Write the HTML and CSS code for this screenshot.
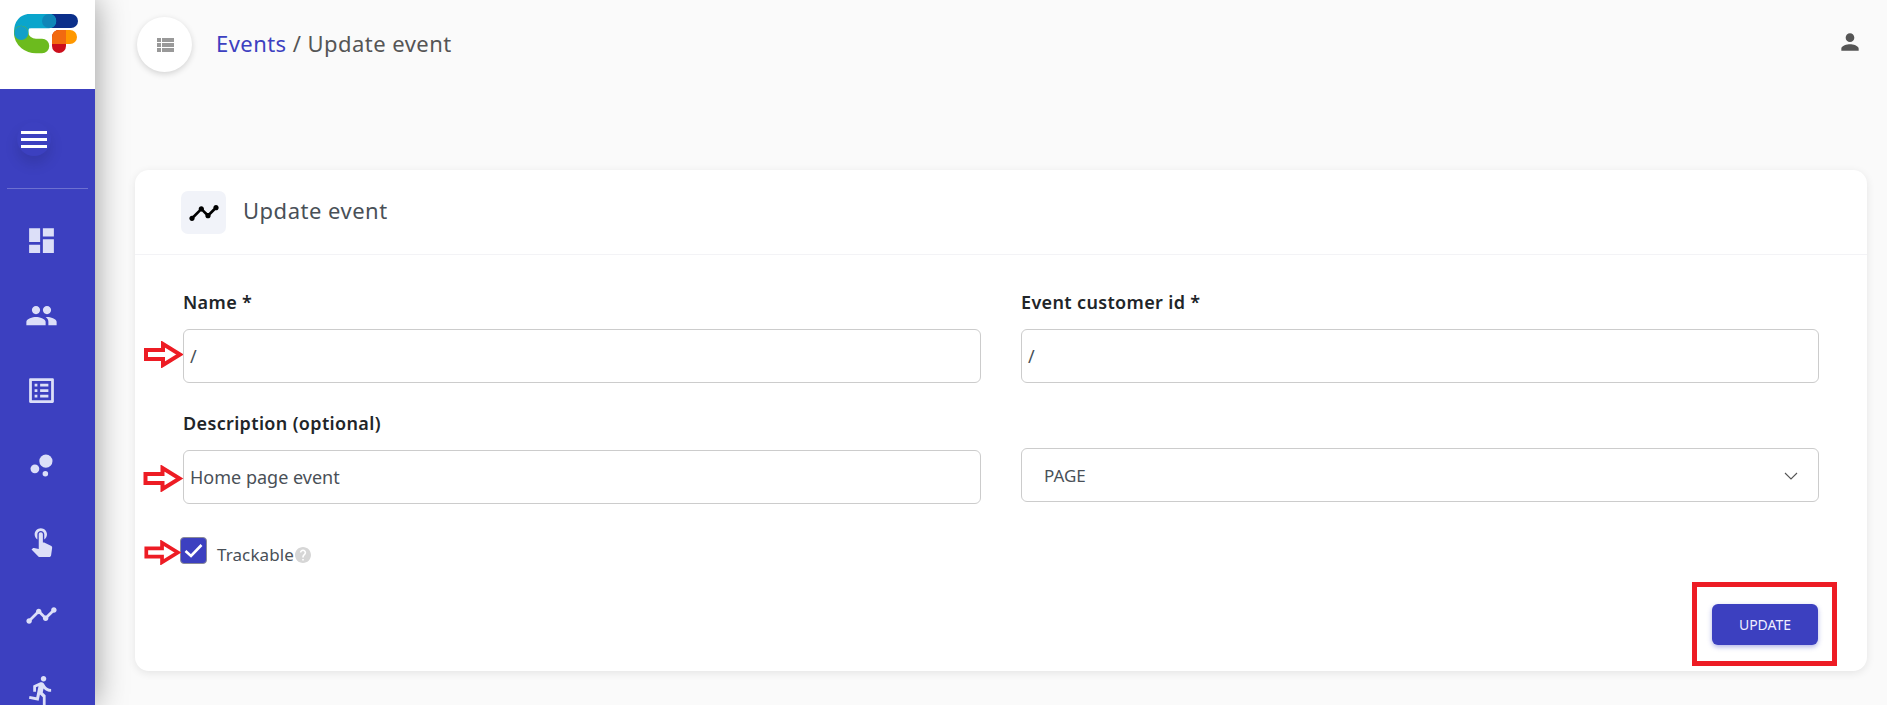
FILE: index.html
```html
<!DOCTYPE html>
<html lang="en">
<head>
<meta charset="utf-8">
<title>Update event</title>
<link rel="stylesheet" href="styles.css">
</head>
<body>
<div class="app">
  <aside class="sidebar">
    <div class="brand">
      <svg class="logo" viewBox="0 0 66 40" width="66" height="40" fill="none" stroke-linecap="round">
        <path d="M35 7H57" stroke="#0b2f8a" stroke-width="14"/>
        <path d="M35 7H17Q7.250 7 7.250 18" stroke="#0aa5cc" stroke-width="14.500"/>
        <path d="M7.250 19C7.250 27 15 32 22 32H28" stroke="#6cbb1e" stroke-width="14.500"/>
        <circle cx="7.250" cy="19" r="7" fill="#12a0c8"/>
        <circle cx="35" cy="7" r="7" fill="#0f86b8"/>
        <path d="M45 23H56" stroke="#ff9800" stroke-width="14"/>
        <path d="M45 23V32" stroke="#cc0f1c" stroke-width="14"/>
        <path d="M38 30V23a7 7 0 0 1 7-7h7V30Z" fill="#f26a10"/>
      </svg>
    </div>
    <div class="menu-zone">
      <button class="burger" aria-label="Menu">
        <svg viewBox="0 0 26 17" width="26" height="17" fill="#fff"><rect width="26" height="3" y="0"/><rect width="26" height="3" y="7"/><rect width="26" height="3" y="14"/></svg>
      </button>
    </div>
    <nav class="nav">
      <a class="nav-item"><svg viewBox="0 0 24 24"><path d="M3 13h8V3H3v10zm0 8h8v-6H3v6zm10 0h8V11h-8v10zm0-18v6h8V3h-8z"/></svg></a>
      <a class="nav-item"><svg viewBox="0 0 24 24"><path d="M16 11c1.660 0 2.990-1.340 2.990-3S17.660 5 16 5c-1.660 0-3 1.340-3 3s1.340 3 3 3zm-8 0c1.660 0 2.990-1.340 2.990-3S9.660 5 8 5C6.340 5 5 6.340 5 8s1.340 3 3 3zm0 2c-2.330 0-7 1.170-7 3.500V19h14v-2.500c0-2.330-4.670-3.500-7-3.500zm8 0c-.29 0-.62.02-.97.05 1.160.84 1.970 1.970 1.970 3.450V19h6v-2.500c0-2.330-4.670-3.500-7-3.500z"/></svg></a>
      <a class="nav-item"><svg viewBox="0 0 24 24"><path d="M19 5v14H5V5h14m1.100-2H3.900c-.5 0-.9.4-.9.9v16.200c0 .4.4.9.9.9h16.200c.4 0 .9-.5.9-.9V3.900c0-.5-.5-.9-.9-.9zM11 7h6v2h-6V7zm0 4h6v2h-6v-2zm0 4h6v2h-6zM7 7h2v2H7zm0 4h2v2H7zm0 4h2v2H7z"/></svg></a>
      <a class="nav-item"><svg viewBox="0 0 24 24"><circle cx="7.200" cy="14.400" r="3.200"/><circle cx="14.800" cy="18" r="2"/><circle cx="15.200" cy="8.800" r="4.800"/></svg></a>
      <a class="nav-item"><svg viewBox="0 0 24 24"><path d="M9 11.240V7.500C9 6.120 10.120 5 11.500 5S14 6.120 14 7.500v3.740c1.210-.81 2-2.180 2-3.740C16 5.010 13.990 3 11.500 3S7 5.010 7 7.500c0 1.560.79 2.930 2 3.740zm9.840 4.630l-4.540-2.260c-.17-.07-.35-.11-.54-.11H13v-6c0-.83-.67-1.500-1.500-1.500S10 6.670 10 7.500v10.740l-3.430-.72c-.08-.01-.15-.03-.24-.03-.31 0-.59.13-.79.33l-.79.8 4.940 4.940c.27.27.65.44 1.060.44h6.790c.75 0 1.330-.55 1.440-1.280l.75-5.270c.01-.07.02-.14.02-.2 0-.62-.38-1.160-.91-1.380z"/></svg></a>
      <a class="nav-item"><svg viewBox="0 0 24 24"><path d="M23 8c0 1.100-.9 2-2 2-.18 0-.35-.02-.51-.07l-3.560 3.550c.05.16.07.34.07.52 0 1.100-.9 2-2 2s-2-.9-2-2c0-.18.02-.36.07-.52l-2.550-2.550c-.16.05-.34.07-.52.07s-.36-.02-.52-.07l-4.550 4.560c.05.16.07.33.07.51 0 1.100-.9 2-2 2s-2-.9-2-2 .9-2 2-2c.18 0 .35.02.51.07l4.560-4.550C8.020 9.360 8 9.180 8 9c0-1.100.9-2 2-2s2 .9 2 2c0 .18-.02.36-.07.52l2.550 2.550c.16-.05.34-.07.52-.07s.36.02.52.07l3.550-3.560C19.020 8.350 19 8.180 19 8c0-1.100.9-2 2-2s2 .9 2 2z"/></svg></a>
      <a class="nav-item"><svg viewBox="0 0 24 24"><path d="M13.490 5.480c1.100 0 2-.9 2-2s-.9-2-2-2-2 .9-2 2 .9 2 2 2zm-3.600 13.900l1-4.400 2.100 2v6h2v-7.500l-2.100-2 .6-3c1.300 1.500 3.300 2.500 5.500 2.500v-2c-1.900 0-3.500-1-4.300-2.400l-1-1.600c-.4-.6-1-1-1.700-1-.3 0-.5.1-.8.1l-5.200 2.200v4.700h2v-3.400l1.800-.7-1.600 8.100-4.900-1-.4 2 7 1.400z"/></svg></a>
    </nav>
  </aside>
  <main class="main">
    <header class="topbar">
      <div class="round-btn">
        <svg viewBox="0 0 24 24" width="24" height="24" fill="#999"><path d="M4 14h4v-4H4v4zm0 5h4v-4H4v4zM4 9h4V5H4v4zm5 5h12v-4H9v4zm0 5h12v-4H9v4zM9 5v4h12V5H9z"/></svg>
      </div>
      <div class="crumbs"><a class="crumb-link">Events</a> / Update event</div>
      <svg class="user" viewBox="0 0 24 24" width="26" height="26" fill="#555"><path d="M12 12c2.210 0 4-1.790 4-4s-1.790-4-4-4-4 1.790-4 4 1.790 4 4 4zm0 2c-2.670 0-8 1.340-8 4v2h16v-2c0-2.660-5.330-4-8-4z"/></svg>
    </header>
    <section class="card">
      <div class="card-head">
        <div class="head-icon">
          <svg viewBox="0 0 24 24" width="32" height="32" fill="#000"><path d="M23 8c0 1.100-.9 2-2 2-.18 0-.35-.02-.51-.07l-3.560 3.550c.05.16.07.34.07.52 0 1.100-.9 2-2 2s-2-.9-2-2c0-.18.02-.36.07-.52l-2.550-2.550c-.16.05-.34.07-.52.07s-.36-.02-.52-.07l-4.550 4.560c.05.16.07.33.07.51 0 1.100-.9 2-2 2s-2-.9-2-2 .9-2 2-2c.18 0 .35.02.51.07l4.560-4.550C8.020 9.360 8 9.180 8 9c0-1.100.9-2 2-2s2 .9 2 2c0 .18-.02.36-.07.52l2.550 2.550c.16-.05.34-.07.52-.07s.36.02.52.07l3.550-3.560C19.020 8.350 19 8.180 19 8c0-1.100.9-2 2-2s2 .9 2 2z"/></svg>
        </div>
        <h1 class="card-title">Update event</h1>
      </div>
      <form class="form">
        <div class="field">
          <label class="label">Name *</label>
          <div class="input">/</div>
        </div>
        <div class="field">
          <label class="label">Event customer id *</label>
          <div class="input">/</div>
        </div>
        <div class="field">
          <label class="label">Description (optional)</label>
          <div class="input">Home page event</div>
        </div>
        <div class="field field-select">
          <div class="input select">PAGE
            <svg viewBox="0 0 14 8" width="14" height="8" fill="none" stroke="#555" stroke-width="1.100"><path d="M1 1l6 6 6-6"/></svg>
          </div>
        </div>
        <div class="check-row">
          <span class="checkbox"><svg viewBox="0 0 25 25" width="25" height="25" fill="none" stroke="#fff" stroke-width="2.600"><path d="M4.500 13l5.500 5 10.500-11"/></svg></span>
          <span class="check-label">Trackable</span>
          <svg class="help" viewBox="2 2 20 20" width="16" height="16" fill="#d6d6d6"><path d="M12 2C6.480 2 2 6.480 2 12s4.480 10 10 10 10-4.480 10-10S17.520 2 12 2zm1 17h-2v-2h2v2zm2.070-7.750l-.9.92C13.450 12.900 13 13.500 13 15h-2v-.5c0-1.100.45-2.100 1.170-2.830l1.240-1.260c.37-.36.59-.86.59-1.410 0-1.100-.9-2-2-2s-2 .9-2 2H8c0-2.210 1.790-4 4-4s4 1.790 4 4c0 .88-.36 1.680-.93 2.250z"/></svg>
        </div>
        <div class="actions">
          <button type="button" class="update">UPDATE</button>
        </div>
      </form>
      <svg class="arrow arrow-1" viewBox="0 0 39 27" width="39" height="27"><path d="M2 9h17V3l17 10.500L19 24v-6H2z"/></svg>
      <svg class="arrow arrow-2" viewBox="0 0 39 27" width="42" height="27"><path d="M2 9h17V3l17 10.500L19 24v-6H2z"/></svg>
      <svg class="arrow arrow-3" viewBox="0 0 39 27" width="37" height="25"><path d="M2 9h17V3l17 10.500L19 24v-6H2z"/></svg>
      <div class="highlight"></div>
    </section>
  </main>
</div>
</body>
</html>
```
FILE: styles.css
```css
* { box-sizing: border-box; }
html, body { margin: 0; height: 705px; overflow: hidden; }
body { font-family: "Noto Sans", "Open Sans", sans-serif; background: #fafafa; color: #495057; }
.app { display: flex; height: 705px; overflow: hidden; }
.sidebar { width: 95px; flex: none; background: #3c40c0; box-shadow: 0 0 30px rgba(0,0,0,.4); position: relative; z-index: 2; }
.brand { height: 89px; background: #fff; padding: 14px 0 0 14px; }
.logo { display: block; }
.menu-zone { height: 100px; margin: 0 7px; border-bottom: 1px solid rgba(255,255,255,.25); display: flex; align-items: center; justify-content: flex-start; padding: 0 0 0 10px; }
.burger { width: 34px; height: 34px; border: 0; padding: 0; background: #3c40c0; border-radius: 50%; box-shadow: 0 8px 14px rgba(0,0,0,.12); display: flex; align-items: center; justify-content: center; margin-top: 1px; }
.nav { padding-top: 14px; display: flex; flex-direction: column; }
.nav-item { height: 75px; flex: none; display: flex; align-items: center; justify-content: center; padding-right: 13px; }
.nav-item svg { width: 33px; height: 33px; fill: #dcdff8; }
.main { flex: 1; min-width: 0; padding: 0 20px 0 40px; }
.topbar { height: 170px; padding: 17px 0 0 2px; display: flex; align-items: flex-start; }
.round-btn { width: 55px; height: 55px; border-radius: 50%; background: #fff; box-shadow: 0 2px 6px rgba(0,0,0,.16); display: flex; align-items: center; justify-content: center; flex: none; }
.crumbs { margin-left: 24px; font-size: 22px; letter-spacing: .45px; line-height: 53px; color: #555; }
.crumb-link { color: #3c40c0; }
.user { margin-left: auto; margin-top: 12px; margin-right: 4px; }
.card { position: relative; height: 501px; background: #fff; border-radius: 14px; box-shadow: 0 2px 8px rgba(0,0,0,.09); }
.card-head { height: 85px; padding: 21px 0 0 46px; display: flex; align-items: flex-start; border-bottom: 1px solid #f3f3f6; }
.head-icon { width: 45px; height: 43px; background: #f1f3f9; border-radius: 7px; display: flex; align-items: center; justify-content: center; }
.card-title { margin: 0 0 0 17px; font-size: 22px; letter-spacing: .5px; font-weight: 400; line-height: 39px; color: #495057; }
.form { display: grid; grid-template-columns: 798px 798px; column-gap: 40px; padding: 30px 0 0 48px; }
.field { display: flex; flex-direction: column; height: 121px; }
.field-select { padding-top: 42px; }
.label { font-size: 18px; letter-spacing: .35px; font-weight: 600; line-height: 34px; height: 44px; color: #212529; }
.input { height: 54px; flex: none; border: 1px solid #ccc; border-radius: 6px; padding: 0 6px; font-size: 18px; line-height: 52px; color: #495057; background: #fff; }
.select { display: flex; align-items: center; justify-content: space-between; padding: 2px 20px 0 22px; font-size: 17px; }
.check-row { grid-column: 1 / -1; margin: 10px 0 0 -3px; display: flex; align-items: center; height: 27px; }
.checkbox { width: 27px; height: 27px; background: #3c40c0; border: 1px solid #8a8a98; border-radius: 4px; display: flex; align-items: center; justify-content: center; }
.check-label { margin-left: 10px; font-size: 17px; letter-spacing: .1px; line-height: 30px; color: #495057; margin-top: 8px; }
.help { margin-left: 1px; margin-top: 8px; }
.actions { grid-column: 1 / -1; display: flex; justify-content: flex-end; padding: 40px 1px 0 0; }
.update { width: 106px; height: 41px; border: 0; border-radius: 6px; background: #3c40c0; color: #eef; font: 400 14px "Noto Sans", sans-serif; box-shadow: 0 2px 5px rgba(60,64,192,.4); }
.arrow { position: absolute; }
.arrow path { fill: #fff; stroke: #ed1c24; stroke-width: 4; }
.arrow-1 { left: 9px; top: 171px; }
.arrow-2 { left: 7px; top: 295px; }
.arrow-3 { left: 9px; top: 370px; }
.highlight { position: absolute; left: 1557px; top: 412px; width: 145px; height: 84px; border: 5px solid #ed1c24; }
```
